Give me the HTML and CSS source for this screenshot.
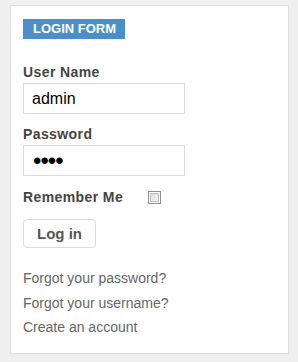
FILE: index.html
```html
<!DOCTYPE html>
<html lang="en">
<head>
  <meta charset="UTF-8" />
  <meta name="viewport" content="width=device-width, initial-scale=1.0">
  <title>Login Form</title>
  <link rel="stylesheet" href="styles.css">
</head>
<body>
  <div class="login-module">
    <h3 class="module-title">LOGIN FORM</h3>

    <form class="login-form">
      <div class="form-group">
        <label for="username">User Name</label>
        <input type="text" id="username" value="admin">
      </div>
      <div class="form-group">
        <label for="password">Password</label>
        <input type="password" id="password" value="1234">
      </div>
      <div class="remember-row">
        <label for="remember">Remember Me</label>
        <input type="checkbox" id="remember" class="remember-check">
      </div>
      <button type="button" class="login-button">Log in</button>
    </form>

    <ul class="login-links">
      <li><a href="#">Forgot your password?</a></li>
      <li><a href="#">Forgot your username?</a></li>
      <li><a href="#">Create an account</a></li>
    </ul>
  </div>
</body>
</html>
```

FILE: styles.css
```css
body {
  margin: 0;
  background: #efefef;
  font-family: "Liberation Sans", Arial, sans-serif;
}
.login-module {
  margin: 5px 9px 0 10px;
  height: 322px;
  padding: 13px 12px 12px 12px;
  background: #fff;
  border: 1px solid #dedede;
}
.module-title {
  display: inline-block;
  margin: 0;
  padding: 0 9px 0 10px;
  background-color: #4b8fca;
  color: white;
  font-size: 13px;
  font-weight: bold;
  line-height: 20px;
}
.login-form {
  margin-top: 23px;
}
.form-group {
  margin-bottom: 10px;
}
.form-group label,
.remember-row label {
  display: block;
  color: #444;
  font-size: 14px;
  font-weight: bold;
  line-height: 20px;
  letter-spacing: 0.4px;
}
.form-group input {
  display: block;
  box-sizing: border-box;
  width: 162px;
  height: 31px;
  margin: 1px 0 0 0;
  padding: 0 8px;
  border: 1px solid #dcdcdc;
  border-radius: 0;
  font-family: "Liberation Sans", Arial, sans-serif;
  font-size: 16px;
  color: #000;
  outline: none;
}
.form-group input[type="password"] {
  padding-left: 9px;
  font-size: 24px;
  letter-spacing: -1px;
}
.remember-row {
  display: flex;
  align-items: center;
  gap: 25px;
  margin-top: 11px;
}
.remember-check {
  appearance: none;
  -webkit-appearance: none;
  width: 13px;
  height: 13px;
  margin: 0;
  border: 1px solid #8e8f8f;
  background: linear-gradient(135deg, #d6d6d6, #fafafa);
  box-shadow: inset 0 0 0 1px #fff, inset 0 0 0 2px #c2c2c2;
}
.login-button {
  display: block;
  margin-top: 12px;
  width: 73px;
  height: 29px;
  padding: 0;
  background: #fff;
  border: 1px solid #dcdcdc;
  border-radius: 4px;
  color: #555;
  font-family: "Liberation Sans", Arial, sans-serif;
  font-size: 15px;
  font-weight: bold;
  cursor: pointer;
}
.login-links {
  list-style: none;
  margin: 18px 0 0 0;
  padding: 0;
}
.login-links li {
  font-size: 14px;
  line-height: 24.5px;
}
.login-links a {
  color: #666;
  text-decoration: none;
}
```
